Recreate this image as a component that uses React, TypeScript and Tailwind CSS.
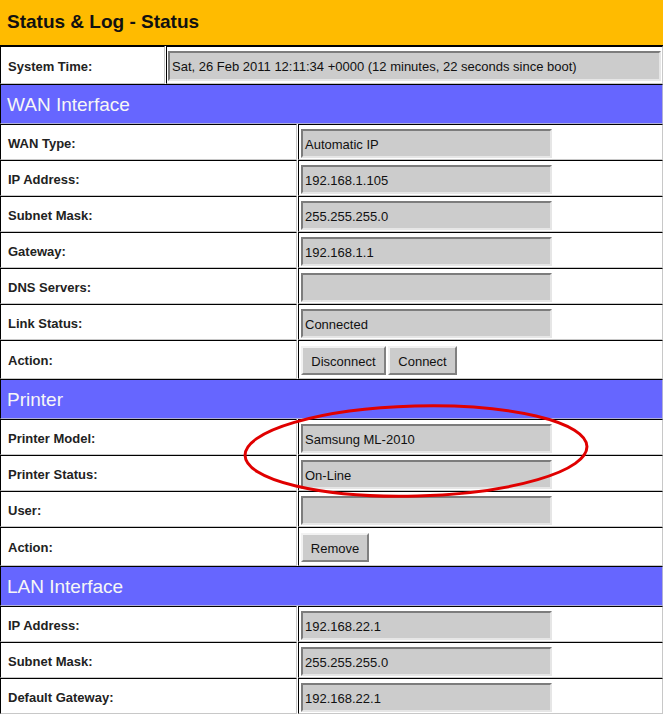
import React from 'react';

const cell =
  'border border-t-black border-l-black border-b-[#c8c8c8] border-r-[#c8c8c8] bg-white';

const Field: React.FC<{ value?: string; wide?: boolean }> = ({ value = '', wide }) => (
  <div
    className={`${wide ? 'flex-1 h-[30px]' : 'w-[251px] h-[29px]'} flex items-center bg-[#cccccc] border-2 border-t-[#7c7c7c] border-l-[#7c7c7c] border-b-[#e6e6e6] border-r-[#e6e6e6] pl-[2px] pt-[3px] text-[13px] text-[#111] whitespace-nowrap overflow-hidden`}
  >
    {value}
  </div>
);

const Btn: React.FC<{ children: React.ReactNode; w: string }> = ({ children, w }) => (
  <button
    className={`${w} h-[29px] bg-[#cccccc] border-2 border-t-[#f2f2f2] border-l-[#f2f2f2] border-b-[#808080] border-r-[#808080] pt-[2px] text-[13px] text-[#111] flex items-center justify-center`}
  >
    {children}
  </button>
);

const Row: React.FC<{ label: string; children: React.ReactNode; tall?: boolean }> = ({
  label,
  children,
  tall,
}) => (
  <div className={`flex gap-[1px] ${tall ? 'h-[39px]' : 'h-[36px]'}`}>
    <div className={`${cell} w-[297px] flex items-center pl-[7px] pt-[3px] text-[13px] font-bold text-[#222]`}>
      {label}
    </div>
    <div className={`${cell} flex-1 flex items-center pl-[2px] pt-[2px] gap-[2px]`}>{children}</div>
  </div>
);

const Section: React.FC<{ title: string }> = ({ title }) => (
  <div className="h-[40px] flex items-center bg-[#6666ff] border border-t-black border-l-black border-b-[#b0b0d8] border-r-[#b0b0d8] pl-[6px] pt-[2px] text-[19px] text-[#f6f6f6]">
    {title}
  </div>
);

export default function App() {
  return (
    <div
      className="relative w-[663px] h-[717px] bg-white overflow-hidden"
      style={{ fontFamily: '"Liberation Sans", Arial, sans-serif' }}
    >
      <div className="h-[46px] bg-[#ffbb00] border-b border-black flex items-center pl-[7px] text-[19px] font-bold text-[#111]">
        Status &amp; Log - Status
      </div>

      <div className="flex gap-[1px] h-[38px]">
        <div className={`${cell} w-[165px] flex items-center pl-[7px] pt-[3px] text-[13px] font-bold text-[#222]`}>
          System Time:
        </div>
        <div className={`${cell} flex-1 flex items-center pl-[1px] pr-[1px] pt-[1px]`}>
          <Field wide value="Sat, 26 Feb 2011 12:11:34 +0000 (12 minutes, 22 seconds since boot)" />
        </div>
      </div>

      <Section title="WAN Interface" />
      <Row label="WAN Type:"><Field value="Automatic IP" /></Row>
      <Row label="IP Address:"><Field value="192.168.1.105" /></Row>
      <Row label="Subnet Mask:"><Field value="255.255.255.0" /></Row>
      <Row label="Gateway:"><Field value="192.168.1.1" /></Row>
      <Row label="DNS Servers:"><Field /></Row>
      <Row label="Link Status:"><Field value="Connected" /></Row>
      <Row label="Action:" tall>
        <Btn w="w-[85px]">Disconnect</Btn>
        <Btn w="w-[69px]">Connect</Btn>
      </Row>

      <Section title="Printer" />
      <Row label="Printer Model:"><Field value="Samsung ML-2010" /></Row>
      <Row label="Printer Status:"><Field value="On-Line" /></Row>
      <Row label="User:"><Field /></Row>
      <Row label="Action:" tall>
        <Btn w="w-[68px]">Remove</Btn>
      </Row>

      <Section title="LAN Interface" />
      <Row label="IP Address:"><Field value="192.168.22.1" /></Row>
      <Row label="Subnet Mask:"><Field value="255.255.255.0" /></Row>
      <Row label="Default Gateway:"><Field value="192.168.22.1" /></Row>

      <svg
        className="absolute left-0 top-0 pointer-events-none"
        width="663"
        height="717"
        viewBox="0 0 663 717"
      >
        <ellipse
          cx="416"
          cy="451"
          rx="171"
          ry="45"
          transform="rotate(-1.5 416 451)"
          fill="none"
          stroke="#e00000"
          strokeWidth="3"
        />
      </svg>
    </div>
  );
}
